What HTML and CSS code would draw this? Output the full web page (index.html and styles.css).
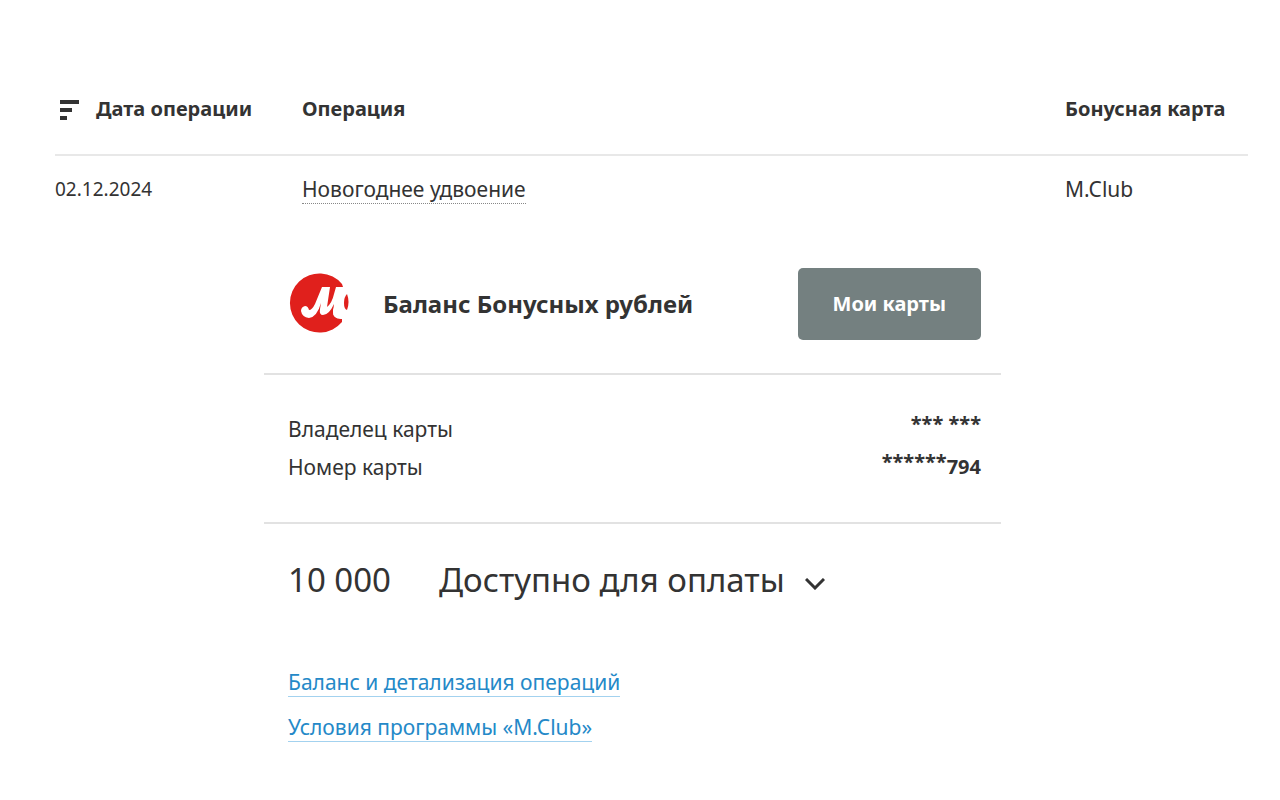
FILE: index.html
```html
<!DOCTYPE html>
<html lang="ru">
<head>
<meta charset="utf-8">
<title>Бонусные рубли</title>
<link rel="stylesheet" href="styles.css">
</head>
<body>
<main class="page">
  <table class="operations">
    <colgroup><col class="col-date"><col class="col-operation"><col class="col-card"></colgroup>
    <thead>
      <tr>
        <th scope="col"><span class="sort"><svg class="sort-icon" viewBox="0 0 20 20" aria-hidden="true"><path d="M1 2h19M1 10h12M1 18h7"/></svg>Дата операции</span></th>
        <th scope="col">Операция</th>
        <th scope="col">Бонусная карта</th>
      </tr>
    </thead>
    <tbody>
      <tr>
        <td class="date">02.12.2024</td>
        <td><a class="operation-link" href="#operation">Новогоднее удвоение</a></td>
        <td>M.Club</td>
      </tr>
    </tbody>
  </table>
  <section class="balance">
    <header class="balance-header">
      <svg class="logo" viewBox="0 0 60 60" aria-hidden="true">
        <path fill="#e0201c" d="M53 11A29.500 29.500 0 1 0 53 49L53 45Q44 46 44 39V37L54 14Z"/>
        <path fill="#fff" d="M33 14H41L38 34Q43 30 45 21L47 14H55L51 34Q50 38 53 37L55 35V46H52Q44 46 44 39L45 31Q40 42 34 42Q30 42 31 36L32 30Q28 44 20 45Q13 44 12 38Q12 34 16 33Q19 33 20 37Q23 37 26 31Z"/>
        <path fill="#e0201c" d="M58 21Q61 29 58 37Q55 36 55 30Q55 24 58 21Z"/>
      </svg>
      <h2 class="title">Баланс Бонусных рублей</h2>
      <button class="cards-button" type="button">Мои карты</button>
    </header>
    <dl class="details">
      <div class="detail"><dt>Владелец карты</dt><dd><span class="mask">*** ***</span></dd></div>
      <div class="detail"><dt>Номер карты</dt><dd><span class="mask">******</span>794</dd></div>
    </dl>
    <div class="summary">
      <span class="amount">10 000</span>
      <button class="available" type="button">Доступно для оплаты<svg class="chevron" viewBox="0 0 20 12" aria-hidden="true"><path d="M1 1l9 9 9-9"/></svg></button>
    </div>
    <nav class="links">
      <a href="#balance">Баланс и детализация операций</a>
      <a href="#terms">Условия программы «M.Club»</a>
    </nav>
  </section>
</main>
</body>
</html>
```
FILE: styles.css
```css
* { box-sizing: border-box; }
body { margin: 0; background: #fff; color: #333; font: 21px/28px "Noto Sans", sans-serif; }
.page { padding: 64px 32px 48px 55px; }
.operations { width: 100%; border-collapse: collapse; table-layout: fixed; }
.col-date { width: 247px; }
.col-card { width: 183px; }
th, td { padding: 0; text-align: left; white-space: nowrap; }
th { height: 91px; border-bottom: 2px solid #e8e8e8; font-size: 20px; }
td { height: 67px; }
.date { font-size: 19px; }
.sort { display: flex; align-items: center; gap: 17px; }
.sort-icon { width: 20px; height: 20px; margin: 2px 0 0 4px; fill: none; stroke: #333; stroke-width: 4; }
.operation-link { color: inherit; text-decoration: none; border-bottom: 1px dotted #888; }
.balance { width: 737px; max-width: calc(100% - 209px); margin: 16px 0 0 209px; }
.balance-header { display: flex; align-items: center; padding: 30px 20px 33px 24px; border-bottom: 2px solid #e2e2e2; }
.logo { width: 62px; height: 60px; margin: 0 33px 2px 0; }
.title { margin: 0; font-size: 24px; line-height: 32px; }
.cards-button { margin-left: auto; padding: 22px 35px; border: 0; border-radius: 5px; background: #748080; color: #fff; font-family: inherit; font-size: 20px; font-weight: bold; line-height: 28px; }
.details { margin: 0; padding: 35px 20px 36px 24px; border-bottom: 2px solid #e2e2e2; }
.detail { display: flex; justify-content: space-between; line-height: 38px; }
dd { margin: 0; font-size: 20px; font-weight: bold; }
.mask { line-height: 20px; vertical-align: 5px; }
.summary { display: flex; gap: 48px; padding: 32px 24px 36px; font-size: 33px; line-height: 48px; }
.available { display: flex; align-items: center; gap: 20px; padding: 0; border: 0; background: none; color: inherit; font: inherit; }
.chevron { width: 20px; height: 12px; margin-top: 8px; fill: none; stroke: #333; stroke-width: 3; }
.links { display: flex; flex-direction: column; align-items: flex-start; gap: 16px; padding: 28px 24px; }
.links a { color: #2489c8; border-bottom: 1px solid #a3d2ef; text-decoration: none; }
```
